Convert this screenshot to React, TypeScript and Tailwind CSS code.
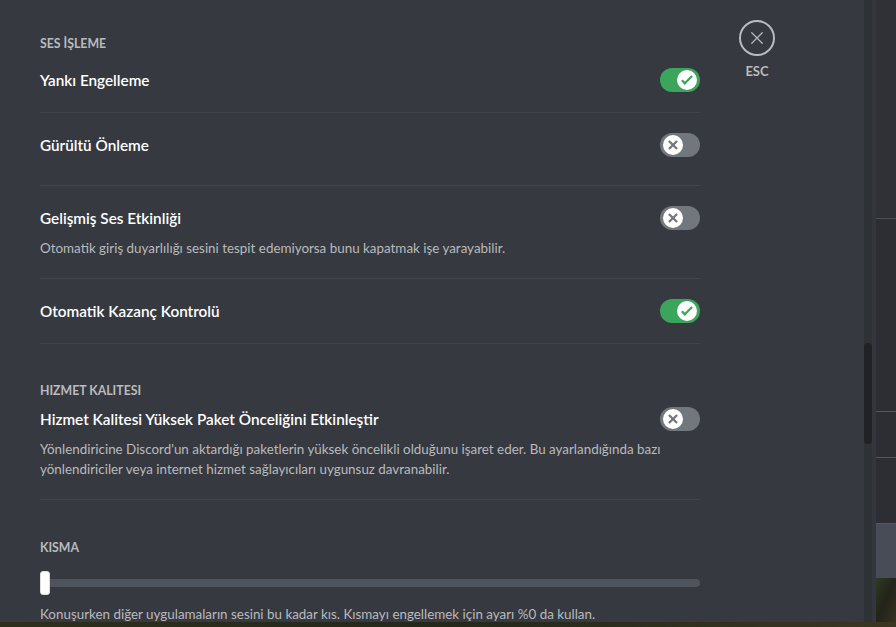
const font = { fontFamily: "Lato, 'Noto Sans', sans-serif" };

function Toggle({ on }: { on: boolean }) {
  return (
    <div
      className={`relative w-10 h-6 rounded-full shrink-0 ${
        on ? "bg-[#3ba55c]" : "bg-[#72767d]"
      }`}
    >
      <div
        className={`absolute top-[2px] w-5 h-5 rounded-full bg-white flex items-center justify-center ${
          on ? "left-[17px]" : "left-[3px]"
        }`}
      >
        {on ? (
          <svg width="20" height="20" viewBox="0 0 20 20" fill="#3ba55c">
            <path d="M7.89561 14.8538L6.30462 13.2629L14.3099 5.25755L15.9009 6.84854L7.89561 14.8538Z" />
            <path d="M4.08643 11.0903L5.67742 9.49929L9.4485 13.2704L7.85751 14.8614L4.08643 11.0903Z" />
          </svg>
        ) : (
          <svg width="20" height="20" viewBox="0 0 20 20" fill="#72767d">
            <path d="M5.13231 6.72963L6.7233 5.13864L14.855 13.2704L13.264 14.8614L5.13231 6.72963Z" />
            <path d="M13.2704 5.13864L14.8614 6.72963L6.72963 14.8614L5.13864 13.2704L13.2704 5.13864Z" />
          </svg>
        )}
      </div>
    </div>
  );
}

function Row({ title, on }: { title: string; on: boolean }) {
  return (
    <div className="flex items-center justify-between h-6">
      <div className="text-[15.3px] leading-6 font-semibold text-white">{title}</div>
      <Toggle on={on} />
    </div>
  );
}

function Header({ children, className = "" }: { children: string; className?: string }) {
  return (
    <div className={`text-[12.3px] leading-4 font-bold uppercase text-[#b9bbbe] ${className}`}>
      {children}
    </div>
  );
}

function Divider({ className = "" }: { className?: string }) {
  return <div className={`h-px bg-[#42454a] ${className}`} />;
}

function Desc({ children, className = "" }: { children: string; className?: string }) {
  return <div className={`text-[13.4px] leading-5 text-[#b9bbbe] ${className}`}>{children}</div>;
}

export default function App() {
  return (
    <div className="w-[896px] h-[627px] overflow-hidden flex flex-col bg-[#2a2b22]" style={font}>
      <div className="flex h-[622px] shrink-0">
        <div className="w-[864px] bg-[#36393f] flex overflow-hidden">
          <div className="w-[660px] ml-10 pt-9 shrink-0">
            <Header>Ses İşleme</Header>
            <div className="mt-4">
              <Row title="Yankı Engelleme" on />
            </div>
            <Divider className="mt-5" />
            <div className="mt-5">
              <Row title="Gürültü Önleme" on={false} />
            </div>
            <Divider className="mt-7" />
            <div className="mt-5">
              <Row title="Gelişmiş Ses Etkinliği" on={false} />
              <Desc className="mt-2">
                Otomatik giriş duyarlılığı sesini tespit edemiyorsa bunu kapatmak işe yarayabilir.
              </Desc>
            </div>
            <Divider className="mt-5" />
            <div className="mt-5">
              <Row title="Otomatik Kazanç Kontrolü" on />
            </div>
            <Divider className="mt-5" />
            <Header className="mt-[39px]">Hizmet Kalitesi</Header>
            <div className="mt-2">
              <Row title="Hizmet Kalitesi Yüksek Paket Önceliğini Etkinleştir" on={false} />
              <Desc className="mt-2">
                Yönlendiricine Discord'un aktardığı paketlerin yüksek öncelikli olduğunu işaret eder. Bu ayarlandığında bazı yönlendiriciler veya internet hizmet sağlayıcıları uygunsuz davranabilir.
              </Desc>
            </div>
            <Divider className="mt-5" />
            <Header className="mt-10">Kısma</Header>
            <div className="mt-[15px] relative h-6 flex items-center">
              <div className="w-full h-2 rounded-full bg-[#4f545c]" />
              <div className="absolute left-0 top-0 w-[10px] h-6 rounded-[3px] bg-white border border-[#dcddde]" />
            </div>
            <Desc className="mt-[9px] whitespace-nowrap">
              Konuşurken diğer uygulamaların sesini bu kadar kıs. Kısmayı engellemek için ayarı %0 da kullan.
            </Desc>
          </div>
          <div className="ml-[39px] pt-5 flex flex-col items-center w-9 shrink-0">
            <div className="w-9 h-9 rounded-full border-2 border-[#b9bbbe] flex items-center justify-center">
              <svg width="18" height="18" viewBox="0 0 24 24" fill="none" stroke="#b9bbbe" strokeWidth="1.6" strokeLinecap="round">
                <path d="M5 5L19 19M19 5L5 19" />
              </svg>
            </div>
            <div className="mt-[7px] text-[13px] leading-4 font-bold text-[#b9bbbe]">ESC</div>
          </div>
        </div>
        <div className="w-3 flex shrink-0">
          <div className="w-2 bg-[#2e3136] relative">
            <div className="absolute left-0 top-[343px] w-2 h-[101px] rounded-full bg-[#202225]" />
          </div>
          <div className="w-1 bg-[#33363c]" />
        </div>
        <div className="w-5 flex flex-col shrink-0">
          <div className="h-[219px] bg-[#2f3136] border-b border-[#4a4d53]" />
          <div className="h-[193px] bg-[#2c2e34] border-b border-[#55585f]" />
          <div className="h-[46px] bg-[#2c2e34] border-b border-[#55585f]" />
          <div className="h-[66px] bg-[#2c2e34] border-b border-[#55585f]" />
          <div className="h-[54px] bg-[#484c56]" />
          <div className="flex-1 bg-gradient-to-br from-[#2e3a22] via-[#22241a] to-[#3a3020]" />
        </div>
      </div>
      <div className="flex-1 bg-gradient-to-r from-[#2e2e1c] via-[#24281a] to-[#3a3622]" />
    </div>
  );
}
